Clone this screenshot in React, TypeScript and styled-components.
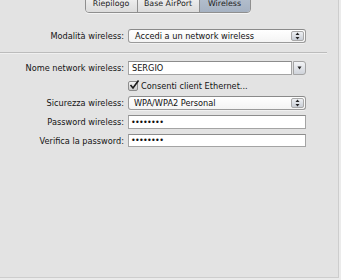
import React from "react";
import styled, { createGlobalStyle } from "styled-components";

const Global = createGlobalStyle`
  html, body { margin: 0; padding: 0; background: #ebebeb; }
  body { font-family: "DejaVu Sans", "Liberation Sans", sans-serif; }
  #root { width: 341px; height: 280px; overflow: hidden; }
`;

const Panel = styled.div`
  box-sizing: border-box;
  width: 339px;
  height: 278px;
  background: #e3e3e3;
  border-right: 1px solid #cdcdcd;
  border-bottom: 1px solid #cdcdcd;
  display: flex;
  flex-direction: column;
`;

const Tabs = styled.div`
  display: flex;
  justify-content: center;
  margin-top: -9px;
  padding-right: 3px;
`;

const Segments = styled.div`
  display: flex;
  height: 20px;
  border: 1px solid #8f8f8f;
  border-radius: 0 0 4px 4px;
  overflow: hidden;
  box-shadow: 0 1px 0 rgba(255, 255, 255, 0.6);
`;

const Segment = styled.div<{ $w: number; $on?: boolean }>`
  box-sizing: border-box;
  width: ${(p) => p.$w}px;
  display: flex;
  align-items: flex-end;
  justify-content: center;
  padding-bottom: 4px;
  font-size: 7.9px;
  color: #1e1e1e;
  background: ${(p) =>
    p.$on
      ? "linear-gradient(#b9c4d2, #a6b2c2)"
      : "linear-gradient(#fbfbfb, #e6e6e6 60%, #dcdcdc)"};
  & + & {
    border-left: 1px solid #8f8f8f;
  }
`;

const Row = styled.div<{ $top: number; $h?: number }>`
  display: grid;
  grid-template-columns: 124px 178px;
  column-gap: 4px;
  align-items: center;
  margin-top: ${(p) => p.$top}px;
  height: ${(p) => p.$h ?? 14}px;
`;

const Label = styled.div`
  text-align: right;
  font-size: 8.2px;
  color: #141414;
  white-space: nowrap;
`;

const Separator = styled.div`
  margin-top: 9px;
  width: 327px;
  height: 1px;
  background: #bcbcbc;
  border-bottom: 1px solid #f0f0f0;
`;

const Popup = styled.div`
  box-sizing: border-box;
  height: 14px;
  display: flex;
  align-items: stretch;
  border: 1px solid #9a9a9a;
  border-top-color: #8a8a8a;
  border-radius: 3px;
  background: linear-gradient(#ffffff, #f4f4f4);
  box-shadow: 0 1px 0 rgba(255, 255, 255, 0.5);
`;

const PopupText = styled.div<{ $pad: number }>`
  flex: 1;
  display: flex;
  align-items: center;
  padding-left: ${(p) => p.$pad}px;
  font-size: 8.2px;
  color: #111;
  white-space: nowrap;
`;

const Stepper = styled.div`
  box-sizing: border-box;
  width: 13px;
  margin: 1px 1px 1px 0;
  border: 1px solid #a9a9a9;
  border-radius: 2px;
  background: linear-gradient(#eef0f3, #c9ced6);
  display: flex;
  align-items: center;
  justify-content: center;
`;

const Combo = styled.div`
  box-sizing: border-box;
  height: 14px;
  display: flex;
  align-items: stretch;
`;

const ComboField = styled.div`
  box-sizing: border-box;
  flex: 1;
  display: flex;
  align-items: center;
  padding-left: 3px;
  background: #fff;
  border: 1px solid #a4a4a4;
  border-top-color: #8c8c8c;
  font-size: 8.2px;
  color: #111;
`;

const ComboButton = styled.div`
  box-sizing: border-box;
  width: 13px;
  margin-left: 1px;
  border: 1px solid #a4a4a4;
  border-radius: 0 3px 3px 0;
  background: linear-gradient(#f3f4f6, #cfd3da);
  display: flex;
  align-items: center;
  justify-content: center;
`;

const Field = styled.div<{ $h?: number }>`
  box-sizing: border-box;
  height: ${(p) => p.$h ?? 14}px;
  display: flex;
  align-items: center;
  padding-left: 2px;
  background: #fff;
  border: 1px solid #a4a4a4;
  border-top-color: #8c8c8c;
  font-size: 8px;
  letter-spacing: -0.7px;
  color: #111;
`;

const CheckWrap = styled.label`
  display: flex;
  align-items: center;
  gap: 3px;
  font-size: 8.2px;
  color: #141414;
  white-space: nowrap;
`;

const CheckBox = styled.span`
  box-sizing: border-box;
  width: 10px;
  height: 10px;
  border: 1px solid #8d8d8d;
  border-radius: 2px;
  background: linear-gradient(#f4f4f4, #c9c9c9);
  display: flex;
  align-items: center;
  justify-content: center;
`;

const Arrows = () => (
  <svg width="5" height="8" viewBox="0 0 5 8">
    <path d="M2.5 0.5 L4.5 3 L0.5 3 Z" fill="#222" />
    <path d="M2.5 7.5 L4.5 5 L0.5 5 Z" fill="#222" />
  </svg>
);

const Down = () => (
  <svg width="5" height="4" viewBox="0 0 5 4">
    <path d="M0.5 0.5 L4.5 0.5 L2.5 3.5 Z" fill="#222" />
  </svg>
);

const Check = () => (
  <svg width="10" height="10" viewBox="0 0 10 10" style={{ marginTop: -2, marginRight: -2 }}>
    <path d="M1.5 5 L4 8 L9.5 0.5" fill="none" stroke="#1a1a1a" strokeWidth="1.6" />
  </svg>
);

export default function App() {
  return (
    <>
      <Global />
      <Panel>
        <Tabs>
          <Segments>
            <Segment $w={51}>Riepilogo</Segment>
            <Segment $w={62}>Base AirPort</Segment>
            <Segment $w={51} $on>
              Wireless
            </Segment>
          </Segments>
        </Tabs>

        <Row $top={16}>
          <Label>Modalità wireless:</Label>
          <Popup>
            <PopupText $pad={6}>Accedi a un network wireless</PopupText>
            <Stepper>
              <Arrows />
            </Stepper>
          </Popup>
        </Row>

        <Separator />

        <Row $top={7}>
          <Label>Nome network wireless:</Label>
          <Combo>
            <ComboField>SERGIO</ComboField>
            <ComboButton>
              <Down />
            </ComboButton>
          </Combo>
        </Row>

        <Row $top={5} $h={12}>
          <span />
          <CheckWrap>
            <CheckBox>
              <Check />
            </CheckBox>
            Consenti client Ethernet...
          </CheckWrap>
        </Row>

        <Row $top={4}>
          <Label>Sicurezza wireless:</Label>
          <Popup>
            <PopupText $pad={5}>WPA/WPA2 Personal</PopupText>
            <Stepper>
              <Arrows />
            </Stepper>
          </Popup>
        </Row>

        <Row $top={5}>
          <Label>Password wireless:</Label>
          <Field>••••••••</Field>
        </Row>

        <Row $top={5} $h={13}>
          <Label>Verifica la password:</Label>
          <Field $h={13}>••••••••</Field>
        </Row>
      </Panel>
    </>
  );
}
